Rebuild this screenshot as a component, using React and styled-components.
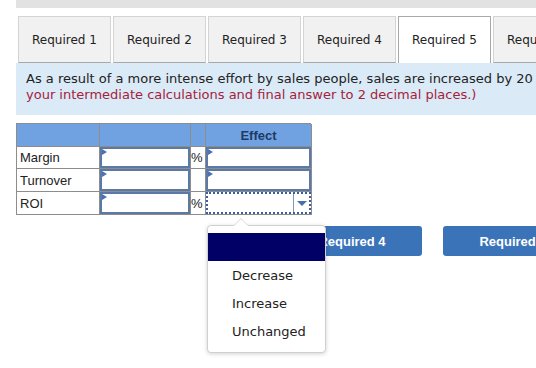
import React from "react";
import styled, { createGlobalStyle } from "styled-components";

const GlobalStyle = createGlobalStyle`
  html, body {
    margin: 0;
    padding: 0;
    overflow: hidden;
    background: #ffffff;
    font-family: Verdana, "DejaVu Sans", sans-serif;
  }
`;

const Page = styled.div`
  width: 536px;
  height: 368px;
  padding-left: 16px;
  box-sizing: border-box;
  overflow: hidden;
`;

const TopBar = styled.div`
  height: 8px;
  width: 600px;
  background: #e2e2e2;
`;

const TabRow = styled.div`
  display: flex;
  gap: 2px;
  margin-top: 8px;
  padding-left: 2px;
  width: 700px;
`;

const Tab = styled.div`
  flex: 0 0 auto;
  width: 93px;
  height: 47px;
  box-sizing: border-box;
  display: flex;
  align-items: center;
  justify-content: center;
  font-size: 12px;
  color: #222;
  background: ${(p) => (p.$active ? "#ffffff" : "#f1f1f1")};
  border: 1px solid ${(p) => (p.$active ? "#a8a8a8" : "#d4d4d4")};
  border-bottom: ${(p) => (p.$active ? "none" : "1px solid #a8a8a8")};
`;

const Info = styled.div`
  width: 600px;
  height: 52px;
  box-sizing: border-box;
  background: #dbeaf7;
  padding: 8px 10px 0;
  font-size: 13px;
  line-height: 16px;
  color: #222;
  white-space: nowrap;
`;

const Red = styled.span`
  color: #a5223b;
`;

const Grid = styled.div`
  display: grid;
  grid-template-columns: 83px 91px 15px 106px;
  grid-template-rows: 23px 22px 23px 23px;
  width: 295px;
  margin-top: 8px;
  border-top: 1px solid #8d8d8d;
  border-left: 1px solid #8d8d8d;
  box-sizing: border-box;
  font-family: "Liberation Sans", Arial, sans-serif;
`;

const Cell = styled.div`
  position: relative;
  box-sizing: border-box;
  border-right: 1px solid #8d8d8d;
  border-bottom: 1px solid #8d8d8d;
  background: ${(p) => (p.$head ? "#70a2e1" : "#ffffff")};
  display: flex;
  align-items: center;
  justify-content: ${(p) => (p.$center ? "center" : "flex-start")};
  padding-left: ${(p) => (p.$pad ? "3px" : "0")};
  font-size: 13px;
  color: #222;
  font-weight: ${(p) => (p.$head ? "bold" : "normal")};
  ${(p) => p.$head && "color: #1e3a66;"}
`;

const Input = styled.div`
  position: absolute;
  inset: 0;
  border: 2px solid #5a79a6;
  background: #fff;

  &::before {
    content: "";
    position: absolute;
    left: 0;
    top: 0;
    border-top: 3px solid transparent;
    border-bottom: 3px solid transparent;
    border-left: 5px solid #4a72b0;
  }
`;

const Select = styled.div`
  position: absolute;
  inset: 0;
  border: 2px dotted #3c5f97;
  background: #fff;
  display: flex;
  justify-content: flex-end;
`;

const Caret = styled.div`
  width: 15px;
  border-left: 1px solid #7f97bb;
  display: flex;
  align-items: center;
  justify-content: center;

  &::after {
    content: "";
    border-left: 5px solid transparent;
    border-right: 5px solid transparent;
    border-top: 5px solid #4270b0;
  }
`;

const Popup = styled.div`
  position: absolute;
  left: 1px;
  top: 33px;
  width: 119px;
  padding: 7px 0;
  box-sizing: border-box;
  background: #fff;
  border: 1px solid #d0d0d0;
  border-radius: 4px;
  box-shadow: 0 1px 4px rgba(0, 0, 0, 0.18);
  z-index: 5;
  font-family: Verdana, "DejaVu Sans", sans-serif;

  &::before {
    content: "";
    position: absolute;
    left: 25px;
    top: -8px;
    border-left: 8px solid transparent;
    border-right: 8px solid transparent;
    border-bottom: 8px solid #d8d8d8;
  }
  &::after {
    content: "";
    position: absolute;
    left: 26px;
    top: -7px;
    border-left: 7px solid transparent;
    border-right: 7px solid transparent;
    border-bottom: 7px solid #fff;
  }
`;

const Option = styled.div`
  height: 28px;
  display: flex;
  align-items: center;
  padding-left: 24px;
  font-size: 13px;
  color: #222;
  background: ${(p) => (p.$selected ? "#000066" : "transparent")};
`;

const ButtonRow = styled.div`
  display: flex;
  gap: 21px;
  margin-top: 11px;
  padding-left: 266px;
  width: 800px;
`;

const NavButton = styled.div`
  flex: 0 0 auto;
  width: 140px;
  height: 30px;
  border-radius: 3px;
  background: #3b73b9;
  color: #fff;
  font-family: "Liberation Sans", Arial, sans-serif;
  font-weight: bold;
  font-size: 13px;
  display: flex;
  align-items: center;
  justify-content: center;
`;

const tabs = ["Required 1", "Required 2", "Required 3", "Required 4", "Required 5", "Required 6"];

export default function App() {
  return (
    <>
      <GlobalStyle />
      <Page>
        <TopBar />
        <TabRow>
          {tabs.map((t, i) => (
            <Tab key={t} $active={i === 4}>
              {t}
            </Tab>
          ))}
        </TabRow>
        <Info>
          As a result of a more intense effort by sales people, sales are increased by 20 percent while operating assets remain unchanged. (Round
          <br />
          <Red>your intermediate calculations and final answer to 2 decimal places.)</Red>
        </Info>
        <Grid>
          <Cell $head />
          <Cell $head />
          <Cell $head />
          <Cell $head $center>Effect</Cell>

          <Cell $pad>Margin</Cell>
          <Cell><Input /></Cell>
          <Cell>%</Cell>
          <Cell><Input /></Cell>

          <Cell $pad>Turnover</Cell>
          <Cell><Input /></Cell>
          <Cell />
          <Cell><Input /></Cell>

          <Cell $pad>ROI</Cell>
          <Cell><Input /></Cell>
          <Cell>%</Cell>
          <Cell>
            <Select>
              <Caret />
            </Select>
            <Popup>
              <Option $selected />
              <Option>Decrease</Option>
              <Option>Increase</Option>
              <Option>Unchanged</Option>
            </Popup>
          </Cell>
        </Grid>
        <ButtonRow>
          <NavButton>Required 4</NavButton>
          <NavButton>Required 6</NavButton>
        </ButtonRow>
      </Page>
    </>
  );
}
